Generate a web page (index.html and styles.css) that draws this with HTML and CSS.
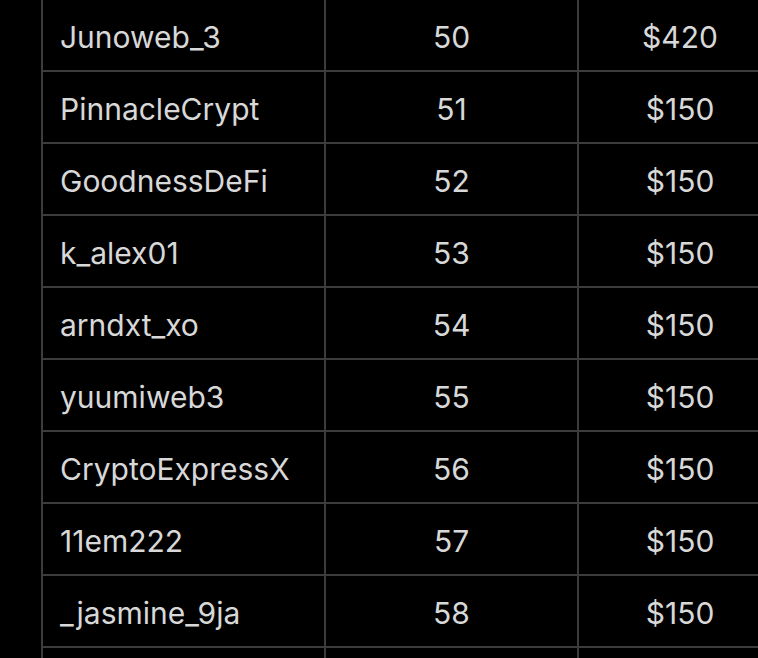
FILE: index.html
```html
<!DOCTYPE html>
<html>
<head>
<meta charset="utf-8">
<link rel="stylesheet" href="styles.css">
</head>
<body>
<div class="board">
  <div class="cell name">Junoweb_3</div><div class="cell num">50</div><div class="cell num">$420</div>
  <div class="cell name">PinnacleCrypt</div><div class="cell num">51</div><div class="cell num">$150</div>
  <div class="cell name">GoodnessDeFi</div><div class="cell num">52</div><div class="cell num">$150</div>
  <div class="cell name">k_alex01</div><div class="cell num">53</div><div class="cell num">$150</div>
  <div class="cell name">arndxt_xo</div><div class="cell num">54</div><div class="cell num">$150</div>
  <div class="cell name">yuumiweb3</div><div class="cell num">55</div><div class="cell num">$150</div>
  <div class="cell name">CryptoExpressX</div><div class="cell num">56</div><div class="cell num">$150</div>
  <div class="cell name">11em222</div><div class="cell num">57</div><div class="cell num">$150</div>
  <div class="cell name">_jasmine_9ja</div><div class="cell num">58</div><div class="cell num">$150</div>
  <div class="cell name"></div><div class="cell num"></div><div class="cell num"></div>
</div>
</body>
</html>
```
FILE: styles.css
```css
html, body {
  margin: 0;
  padding: 0;
  background: #000;
  overflow: hidden;
  height: 658px;
}
.board {
  display: grid;
  grid-template-columns: 283px 253px 204px;
  grid-auto-rows: 72px;
  margin-left: 41px;
  border-left: 2px solid #3c3c3c;
  width: max-content;
  height: 658px;
  overflow: hidden;
  font-family: Inter, "Noto Sans", sans-serif;
  font-size: 30px;
  color: #d8d8d8;
}
.cell {
  box-sizing: border-box;
  border-right: 2px solid #3c3c3c;
  border-bottom: 2px solid #3c3c3c;
  display: flex;
  align-items: center;
  padding-top: 4px;
}
.name {
  padding-left: 17px;
}
.num {
  justify-content: center;
}
```
